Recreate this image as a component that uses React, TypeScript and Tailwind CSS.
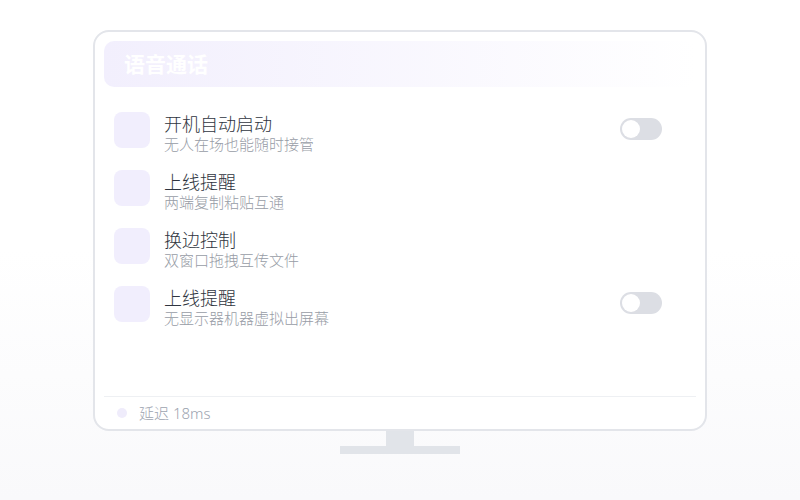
import React from "react";

const rows = [
  { id: 1, title: "开机自动启动", desc: "无人在场也能随时接管", toggle: true },
  { id: 2, title: "上线提醒", desc: "两端复制粘贴互通", toggle: false },
  { id: 3, title: "换边控制", desc: "双窗口拖拽互传文件", toggle: false },
  { id: 4, title: "上线提醒", desc: "无显示器机器虚拟出屏幕", toggle: true },
];

function Toggle() {
  return (
    <div className="mt-[6px] mr-[34px] flex h-[22px] w-[42px] items-center rounded-full bg-[#dcdee4] p-[2px]">
      <div className="h-[18px] w-[18px] rounded-full bg-white" />
    </div>
  );
}

export default function App() {
  return (
    <div
      className="h-[500px] w-[800px] overflow-hidden bg-gradient-to-b from-white via-white to-[#f9f9fb] pt-[30px]"
      style={{ fontFamily: '"Noto Sans", "Noto Sans CJK SC", sans-serif' }}
    >
      <div className="mx-auto flex h-[401px] w-[614px] flex-col rounded-[16px] border-2 border-[#e3e5ea] bg-white p-[9px] pb-0">
        <div className="flex h-[46px] items-center rounded-[10px] bg-gradient-to-r from-[#f2effd] to-white/0 pt-[2px] pl-[20px]">
          <span className="text-[21px] font-bold text-white">语音通话</span>
        </div>

        <div className="flex flex-1 flex-col pt-[25px] pl-[10px]">
          {rows.map((row) => (
            <div key={row.id} className="flex h-[58px] items-start">
              <div className="h-[36px] w-[36px] rounded-[8px] bg-[#f1eefd]" />
              <div className="ml-[14px] flex flex-1 flex-col">
                <span className="text-[18px] font-light leading-[24px] text-[#2f3540]">{row.title}</span>
                <span className="text-[15px] font-light leading-[16px] text-[#979ca6]">{row.desc}</span>
              </div>
              {row.toggle && <Toggle />}
            </div>
          ))}
        </div>

        <div className="flex h-[33px] items-center border-t border-[#eef0f3] pl-[13px]">
          <div className="h-[10px] w-[10px] rounded-full bg-[#efecfb]" />
          <span className="ml-[12px] text-[15px] font-light text-[#9ca3af]">延迟 18ms</span>
        </div>
      </div>

      <div className="mx-auto h-[15px] w-[28px] bg-[#e1e4e9]" />
      <div className="mx-auto h-[8px] w-[120px] bg-[#e1e4e9]" />
    </div>
  );
}
